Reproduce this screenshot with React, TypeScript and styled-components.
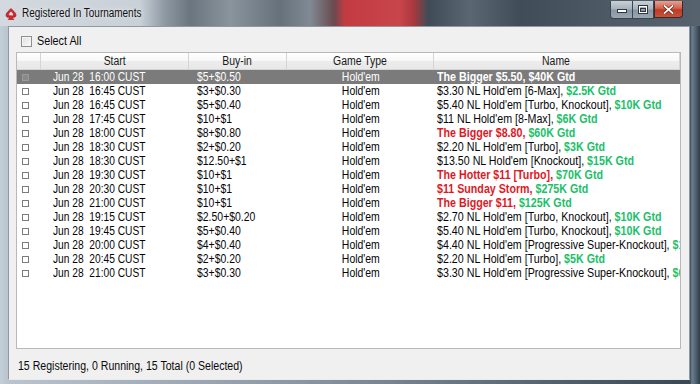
import React from 'react';
import styled, { createGlobalStyle } from 'styled-components';

const GlobalStyle = createGlobalStyle`
  html, body {
    margin: 0;
    padding: 0;
  }
  body {
    font-family: "Liberation Sans", Arial, sans-serif;
    font-size: 12px;
    color: #0a0a0a;
  }
`;

// the screenshot's UI font is a narrow one; Liberation Sans squeezed horizontally stands in for it
const Narrow = styled.span<{ $sx?: number; $origin?: string }>`
  display: inline-block;
  white-space: pre;
  transform: scaleX(${({ $sx }) => $sx ?? 0.87});
  transform-origin: ${({ $origin }) => $origin ?? 'left'} center;
`;

const Window = styled.div`
  width: 700px;
  height: 384px;
  overflow: hidden;
  display: flex;
  flex-direction: column;
  background: linear-gradient(90deg, #c4ced8 0px, #b9c4cf 8px, #8a96a2 300px, #4a5866 600px, #3a4856 690px, #6d8090 692px, #2f3d4a 700px);
`;

const TitleBar = styled.div`
  height: 26px;
  flex: none;
  display: flex;
  align-items: flex-start;
  padding: 0 17px 0 5px;
  background: linear-gradient(
    90deg,
    #d3d9df 0px,
    #c9d0d7 140px,
    #8d98a2 165px,
    #6a757f 190px,
    #8a949d 230px,
    #66717b 280px,
    #7f8a94 310px,
    #6a4a50 334px,
    #c23b41 345px,
    #c8464b 400px,
    #a8383e 414px,
    #3f4c58 428px,
    #5a6772 470px,
    #404d59 520px,
    #4c5965 600px,
    #56636f 700px
  );
`;

const TitleGroup = styled.div`
  display: flex;
  align-items: center;
  gap: 5px;
  height: 26px;
`;

const TitleText = styled.span`
  font-size: 12px;
  color: #101010;
  text-shadow: 0 0 6px rgba(255, 255, 255, 0.9);
`;

const Controls = styled.div`
  margin-left: auto;
  margin-top: 1px;
  display: flex;
`;

const ControlGroup = styled.div`
  display: flex;
  border: 1px solid #3c4650;
  border-top: none;
  border-right: none;
  border-radius: 0 0 0 4px;
  overflow: hidden;
`;

const CtlButton = styled.div<{ $close?: boolean; $width: number }>`
  width: ${({ $width }) => $width}px;
  height: 17px;
  display: flex;
  align-items: center;
  justify-content: center;
  box-sizing: border-box;
  border-right: 1px solid #3c4650;
  background: ${({ $close }) =>
    $close
      ? 'linear-gradient(180deg, #e7a08f 0%, #d4634f 45%, #bf3a24 55%, #c9523a 100%)'
      : 'linear-gradient(180deg, #c9d0d7 0%, #a9b3bd 45%, #8a96a2 55%, #9aa6b1 100%)'};
  ${({ $close }) =>
    $close &&
    `
    border: 1px solid #3c2a28;
    border-top: none;
    border-radius: 0 0 4px 0;
  `}
`;

const Body = styled.div`
  flex: 1;
  display: flex;
  padding: 0 10px 4px 8px;
`;

const Client = styled.div`
  flex: 1;
  display: flex;
  flex-direction: column;
  background: #f0f0f0;
  border: 1px solid #8e99a4;
  border-bottom-color: #e8ecef;
  padding: 0 8px 0 7px;
`;

const SelectRow = styled.label`
  height: 25px;
  flex: none;
  display: flex;
  align-items: center;
  gap: 5px;
  padding: 3px 0 0 5px;
  box-sizing: border-box;
`;

const BigCheck = styled.span`
  width: 11px;
  height: 11px;
  box-sizing: border-box;
  border: 1px solid #8f8f8f;
  background: linear-gradient(135deg, #e0e0e0 0%, #fafafa 100%);
  box-shadow: inset 0 0 0 1px #f4f4f4;
`;

const ListView = styled.div`
  height: 297px;
  flex: none;
  background: #fff;
  border: 1px solid #b9b9b9;
  box-sizing: border-box;
  overflow: hidden;
`;

const columns = '24px 148px 98px 147px 1fr';

const HeaderRow = styled.div`
  display: grid;
  grid-template-columns: ${columns};
  height: 17px;
  background: linear-gradient(180deg, #ffffff 0%, #f7f7f7 50%, #ececec 51%, #e8e8e8 100%);
  border-bottom: 1px solid #d5d5d5;
  box-sizing: border-box;
`;

const HeaderCell = styled.div`
  text-align: center;
  line-height: 16px;
  color: #1a1a1a;
  border-right: 1px solid #d5d5d5;
  overflow: hidden;
`;

const Row = styled.div<{ $selected?: boolean }>`
  display: grid;
  grid-template-columns: ${columns};
  height: 14px;
  line-height: 14px;
  background: ${({ $selected }) => ($selected ? '#7b7b7b' : 'transparent')};
  color: ${({ $selected }) => ($selected ? '#fff' : '#050505')};
`;

const Cell = styled.div<{ $pad?: number; $align?: string }>`
  padding-left: ${({ $pad }) => $pad ?? 0}px;
  text-align: ${({ $align }) => $align ?? 'left'};
  white-space: pre;
  overflow: hidden;
`;

const CheckCell = styled.div`
  display: flex;
  align-items: center;
  padding-left: 5px;
`;

const SmallCheck = styled.span<{ $dim?: boolean }>`
  width: 7px;
  height: 7px;
  box-sizing: border-box;
  border: 1px solid ${({ $dim }) => ($dim ? '#9a9a9a' : '#7c7c7c')};
  background: ${({ $dim }) => ($dim ? '#8a8a8a' : '#fff')};
`;

const Promo = styled.span`
  color: #e0181f;
  font-weight: bold;
`;

const Guarantee = styled.span`
  color: #1cbf6a;
  font-weight: bold;
`;

const SelectedName = styled.span`
  font-weight: bold;
`;

const StatusBar = styled.div`
  flex: 1;
  display: flex;
  align-items: center;
  padding: 3px 0 0 2px;
`;

type Tourney = {
  start: string;
  buyin: string;
  promo?: string;
  name?: string;
  gtd: string;
};

const rows: Tourney[] = [
  { start: '16:00', buyin: '$5+$0.50', promo: 'The Bigger $5.50,', gtd: '$40K Gtd' },
  { start: '16:45', buyin: '$3+$0.30', name: '$3.30 NL Hold\'em [6-Max],', gtd: '$2.5K Gtd' },
  { start: '16:45', buyin: '$5+$0.40', name: '$5.40 NL Hold\'em [Turbo, Knockout],', gtd: '$10K Gtd' },
  { start: '17:45', buyin: '$10+$1', name: '$11 NL Hold\'em [8-Max],', gtd: '$6K Gtd' },
  { start: '18:00', buyin: '$8+$0.80', promo: 'The Bigger $8.80,', gtd: '$60K Gtd' },
  { start: '18:30', buyin: '$2+$0.20', name: '$2.20 NL Hold\'em [Turbo],', gtd: '$3K Gtd' },
  { start: '18:30', buyin: '$12.50+$1', name: '$13.50 NL Hold\'em [Knockout],', gtd: '$15K Gtd' },
  { start: '19:30', buyin: '$10+$1', promo: 'The Hotter $11 [Turbo],', gtd: '$70K Gtd' },
  { start: '20:30', buyin: '$10+$1', promo: '$11 Sunday Storm,', gtd: '$275K Gtd' },
  { start: '21:00', buyin: '$10+$1', promo: 'The Bigger $11,', gtd: '$125K Gtd' },
  { start: '19:15', buyin: '$2.50+$0.20', name: '$2.70 NL Hold\'em [Turbo, Knockout],', gtd: '$10K Gtd' },
  { start: '19:45', buyin: '$5+$0.40', name: '$5.40 NL Hold\'em [Turbo, Knockout],', gtd: '$10K Gtd' },
  { start: '20:00', buyin: '$4+$0.40', name: '$4.40 NL Hold\'em [Progressive Super-Knockout],', gtd: '$11K Gtd' },
  { start: '20:45', buyin: '$2+$0.20', name: '$2.20 NL Hold\'em [Turbo],', gtd: '$5K Gtd' },
  { start: '21:00', buyin: '$3+$0.30', name: '$3.30 NL Hold\'em [Progressive Super-Knockout],', gtd: '$6K Gtd' },
];

const SpadeIcon = () => (
  <svg width="12" height="12" viewBox="0 0 12 12" style={{ marginTop: 1 }}>
    <path
      d="M6 0.5 C4.5 2.5 1 4.6 1 7.2 C1 9 2.9 9.9 4.6 8.9 C4.4 10 3.9 10.8 3.2 11.5 L8.8 11.5 C8.1 10.8 7.6 10 7.4 8.9 C9.1 9.9 11 9 11 7.2 C11 4.6 7.5 2.5 6 0.5 Z"
      fill="#d8262c"
      stroke="#8e1418"
      strokeWidth="0.6"
    />
    <path d="M6 3.4 C5.2 4.5 3.8 5.5 3.8 6.6 C3.8 7.4 4.8 7.8 5.6 7.2 L6.4 7.2 C7.2 7.8 8.2 7.4 8.2 6.6 C8.2 5.5 6.8 4.5 6 3.4 Z" fill="#fff" opacity="0.85" />
  </svg>
);

const MinimizeGlyph = () => (
  <svg width="10" height="6" viewBox="0 0 10 6">
    <rect x="0.5" y="2.5" width="9" height="3" fill="#fff" stroke="#2e3740" strokeWidth="1" />
  </svg>
);

const MaximizeGlyph = () => (
  <svg width="10" height="9" viewBox="0 0 10 9">
    <rect x="0.5" y="0.5" width="9" height="8" fill="none" stroke="#2e3740" strokeWidth="1" />
    <rect x="1.5" y="1.5" width="7" height="6" fill="none" stroke="#fff" strokeWidth="1" />
    <rect x="2.5" y="3.5" width="5" height="3" fill="none" stroke="#2e3740" strokeWidth="1" />
  </svg>
);

const CloseGlyph = () => (
  <svg width="11" height="9" viewBox="0 0 11 9">
    <path d="M1.5 1 L9.5 8 M9.5 1 L1.5 8" stroke="#5a1a12" strokeWidth="3" strokeLinecap="square" />
    <path d="M1.5 1 L9.5 8 M9.5 1 L1.5 8" stroke="#fff" strokeWidth="1.8" strokeLinecap="square" />
  </svg>
);

export default function App() {
  return (
    <>
      <GlobalStyle />
      <Window>
        <TitleBar>
          <TitleGroup>
            <SpadeIcon />
            <TitleText>
              <Narrow $sx={0.83}>Registered In Tournaments</Narrow>
            </TitleText>
          </TitleGroup>
          <Controls>
            <ControlGroup>
              <CtlButton $width={22}>
                <MinimizeGlyph />
              </CtlButton>
              <CtlButton $width={21}>
                <MaximizeGlyph />
              </CtlButton>
            </ControlGroup>
            <CtlButton $close $width={29}>
              <CloseGlyph />
            </CtlButton>
          </Controls>
        </TitleBar>
        <Body>
          <Client>
            <SelectRow>
              <BigCheck />
              <Narrow $sx={0.9}>Select All</Narrow>
            </SelectRow>
            <ListView>
              <HeaderRow>
                <HeaderCell />
                <HeaderCell>
                  <Narrow $origin="center">Start</Narrow>
                </HeaderCell>
                <HeaderCell>
                  <Narrow $origin="center">Buy-in</Narrow>
                </HeaderCell>
                <HeaderCell>
                  <Narrow $origin="center">Game Type</Narrow>
                </HeaderCell>
                <HeaderCell>
                  <Narrow $origin="center">Name</Narrow>
                </HeaderCell>
              </HeaderRow>
              {rows.map((r, i) => {
                const selected = i === 0;
                return (
                  <Row key={i} $selected={selected}>
                    <CheckCell>
                      <SmallCheck $dim={selected} />
                    </CheckCell>
                    <Cell $pad={12}>
                      <Narrow $sx={0.85}>{`Jun 28  ${r.start} CUST`}</Narrow>
                    </Cell>
                    <Cell $pad={8}>
                      <Narrow>{r.buyin}</Narrow>
                    </Cell>
                    <Cell $align="center">
                      <Narrow $origin="center">Hold'em</Narrow>
                    </Cell>
                    <Cell $pad={3}>
                      <Narrow $sx={0.89}>
                        {selected ? (
                          <SelectedName>
                            {r.promo} {r.gtd}
                          </SelectedName>
                        ) : r.promo ? (
                          <>
                            <Promo>{r.promo}</Promo> <Guarantee>{r.gtd}</Guarantee>
                          </>
                        ) : (
                          <>
                            {r.name} <Guarantee>{r.gtd}</Guarantee>
                          </>
                        )}
                      </Narrow>
                    </Cell>
                  </Row>
                );
              })}
            </ListView>
            <StatusBar>
              <Narrow $sx={0.88}>15 Registering, 0 Running, 15 Total (0 Selected)</Narrow>
            </StatusBar>
          </Client>
        </Body>
      </Window>
    </>
  );
}
